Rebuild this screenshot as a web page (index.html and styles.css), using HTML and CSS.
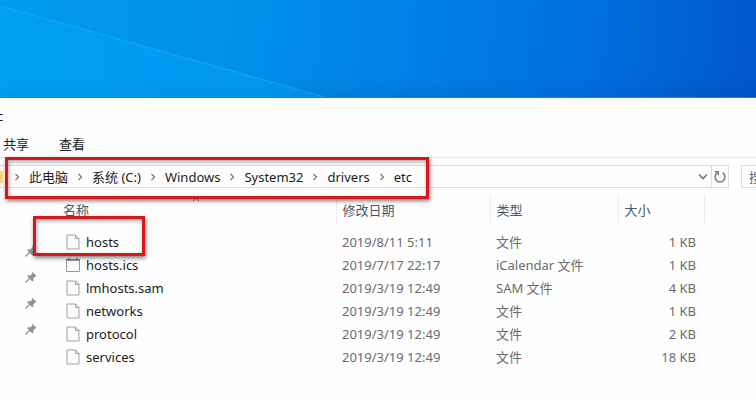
FILE: index.html
```
<!DOCTYPE html>
<html lang="zh-CN">
<head>
  <meta charset="UTF-8" />
  <title>etc</title>
  <link rel="stylesheet" href="styles.css">
</head>
<body>

  <svg class="symbols" aria-hidden="true">
    <symbol id="chevron" viewBox="0 0 6 8">
      <path d="M1.5 1l3 3-3 3" fill="none" stroke="#777" stroke-width="1.2" />
    </symbol>
    <symbol id="file" viewBox="0 0 14 16">
      <path d="M1 1h8.5l3.5 3.500v10.500h-12z" fill="#fbfbfb" stroke="#a0a0a0" />
      <path d="M9.500 1v3.500h3.500" fill="none" stroke="#a0a0a0" />
    </symbol>
    <symbol id="calendar" viewBox="0 0 16 16">
      <path d="M1.500 2.500h13v12h-13z" fill="#fbfbfb" stroke="#999" />
      <path d="M1 3h14M4 1v2M12 1v2" fill="none" stroke="#777" stroke-width="1.400" />
    </symbol>
    <symbol id="pin" viewBox="0 0 12 12">
      <path d="M7 0.500l4.500 4.500-1.300.4-2 2 .1 2.300-1 .7-5.100-5.100.8-1 2.300.1 2-2z" fill="#8c9298" />
      <path d="M4.500 7.500l-4 4" stroke="#8c9298" stroke-width="1.200" />
    </symbol>
  </svg>

  <div class="wallpaper">
    <svg viewBox="0 0 756 98" preserveAspectRatio="none" aria-hidden="true">
      <path d="M0 6L325 98H0z" fill="#00a8ff" fill-opacity="0.350" />
      <path d="M0 6L325 98" stroke="#38b4fc" stroke-opacity="0.500" />
    </svg>
  </div>

  <main class="window">
    <header class="title-bar"><span class="title">etc</span></header>

    <div class="tabs">
      <button type="button">共享</button>
      <button type="button">查看</button>
    </div>

    <div class="toolbar">
      <div class="address">
        <span class="folder"></span>
        <nav class="crumbs">
          <svg class="chevron"><use href="#chevron" /></svg>
          <a href="#">此电脑</a>
          <svg class="chevron"><use href="#chevron" /></svg>
          <a href="#">系统 (C:)</a>
          <svg class="chevron"><use href="#chevron" /></svg>
          <a href="#">Windows</a>
          <svg class="chevron"><use href="#chevron" /></svg>
          <a href="#">System32</a>
          <svg class="chevron"><use href="#chevron" /></svg>
          <a href="#">drivers</a>
          <svg class="chevron"><use href="#chevron" /></svg>
          <a href="#">etc</a>
        </nav>
        <button type="button" class="history" aria-label="历史记录">
          <svg width="12" height="8" viewBox="0 0 12 8"><path d="M2 1.500l4 4 4-4" fill="none" stroke="#777" stroke-width="1.700" /></svg>
        </button>
        <button type="button" class="refresh" aria-label="刷新">
          <svg width="14" height="14" viewBox="0 0 14 14">
            <path d="M9.500 2.600a5 5 0 1 1-5 0" fill="none" stroke="#777" stroke-width="1.500" />
            <path d="M1.800 1.800h3.400v3.400" fill="none" stroke="#777" stroke-width="1.400" />
          </svg>
        </button>
      </div>
      <input type="search" class="search" placeholder="搜索" aria-label="搜索">
      <div class="mark mark-path"></div>
    </div>

    <div class="content">
      <aside class="pins">
        <svg><use href="#pin" /></svg>
        <svg><use href="#pin" /></svg>
        <svg><use href="#pin" /></svg>
        <svg><use href="#pin" /></svg>
      </aside>

      <div class="files">
        <div class="mark mark-file"></div>
        <table>
          <colgroup>
            <col class="col-name">
            <col class="col-date">
            <col class="col-type">
            <col class="col-size">
            <col>
          </colgroup>
          <thead>
            <tr>
              <th class="name">名称<svg class="sort" width="8" height="5" viewBox="0 0 8 5"><path d="M1 4l3-3 3 3" fill="none" stroke="#888" /></svg></th>
              <th>修改日期</th>
              <th>类型</th>
              <th>大小</th>
              <th></th>
            </tr>
          </thead>
          <tbody>
            <tr>
              <td class="name"><svg><use href="#file" /></svg>hosts</td>
              <td>2019/8/11 5:11</td>
              <td>文件</td>
              <td class="size">1 KB</td>
              <td></td>
            </tr>
            <tr>
              <td class="name"><svg><use href="#calendar" /></svg>hosts.ics</td>
              <td>2019/7/17 22:17</td>
              <td>iCalendar 文件</td>
              <td class="size">1 KB</td>
              <td></td>
            </tr>
            <tr>
              <td class="name"><svg><use href="#file" /></svg>lmhosts.sam</td>
              <td>2019/3/19 12:49</td>
              <td>SAM 文件</td>
              <td class="size">4 KB</td>
              <td></td>
            </tr>
            <tr>
              <td class="name"><svg><use href="#file" /></svg>networks</td>
              <td>2019/3/19 12:49</td>
              <td>文件</td>
              <td class="size">1 KB</td>
              <td></td>
            </tr>
            <tr>
              <td class="name"><svg><use href="#file" /></svg>protocol</td>
              <td>2019/3/19 12:49</td>
              <td>文件</td>
              <td class="size">2 KB</td>
              <td></td>
            </tr>
            <tr>
              <td class="name"><svg><use href="#file" /></svg>services</td>
              <td>2019/3/19 12:49</td>
              <td>文件</td>
              <td class="size">18 KB</td>
              <td></td>
            </tr>
          </tbody>
        </table>
      </div>
    </div>
  </main>

</body>
</html>
```
FILE: styles.css
```
* {
  box-sizing: border-box;
}

body {
  margin: 0;
  min-height: 100vh;
  display: flex;
  flex-direction: column;
  background: #fefefe;
  color: #1c1c1c;
  font-family: "Noto Sans", "Noto Sans CJK SC", sans-serif;
  font-size: 13px;
  line-height: 20px;
}

button,
input {
  font: inherit;
  color: inherit;
  background: none;
  border: none;
  padding: 0;
}

.symbols {
  position: absolute;
  width: 0;
  height: 0;
}

.wallpaper {
  height: 98px;
  background:
    linear-gradient(to bottom, transparent 80%, rgba(0, 50, 120, 0.12)),
    linear-gradient(96deg, #009bee 0%, #0091ea 30%, #0080e6 55%, #006fe0 78%, #0057cb 100%);
  border-bottom: 1px solid #3583b8;
}

.wallpaper svg {
  display: block;
  width: 100%;
  height: 100%;
}

.window {
  flex: 1;
  display: flex;
  flex-direction: column;
  overflow: hidden;
}

.title-bar {
  height: 36px;
  padding-top: 8px;
}

.title {
  margin-left: -15px;
}

.tabs {
  display: flex;
  gap: 30px;
  height: 24px;
  padding-left: 3px;
  border-bottom: 1px solid #e8e8e8;
}

.tabs button {
  height: 20px;
}

.toolbar {
  position: relative;
  display: flex;
  gap: 12px;
  padding: 7px 0 8px;
}

.address {
  flex: 1;
  display: flex;
  align-items: center;
  height: 23px;
  border: 1px solid #dcdcdc;
  border-left: none;
}

.folder {
  width: 3px;
  height: 12px;
  background: #f8d775;
}

.crumbs {
  flex: 1;
  display: flex;
  align-items: center;
  gap: 9px;
  padding-left: 11px;
  white-space: nowrap;
}

.crumbs a {
  color: inherit;
  text-decoration: none;
}

.chevron {
  flex: none;
  width: 6px;
  height: 8px;
}

.history,
.refresh {
  display: flex;
  align-items: center;
  justify-content: center;
  width: 17px;
  height: 21px;
}

.refresh {
  border-left: 1px solid #dcdcdc;
}

.search {
  width: 150px;
  height: 23px;
  margin-right: -135px;
  padding-left: 7px;
  border: 1px solid #dcdcdc;
}

.search::placeholder {
  color: #666;
  opacity: 1;
}

.content {
  flex: 1;
  display: flex;
}

.pins {
  display: flex;
  flex-direction: column;
  gap: 14px;
  width: 43px;
  padding: 49px 0 0 25px;
  border-right: 1px solid #f8f8f8;
}

.pins svg {
  width: 12px;
  height: 12px;
}

.files {
  position: relative;
  flex: 1;
}

table {
  width: 100%;
  table-layout: fixed;
  border-collapse: collapse;
}

.col-name {
  width: 293px;
}

.col-date {
  width: 154px;
}

.col-type {
  width: 128px;
}

.col-size {
  width: 86px;
}

th {
  position: relative;
  height: 27px;
  padding: 0 0 0 6px;
  border-right: 1px solid #ebebeb;
  color: #47586c;
  font-weight: normal;
  text-align: left;
}

th:last-child {
  border-right: none;
}

tbody::before {
  content: "";
  display: block;
  height: 7px;
}

td {
  height: 23px;
  padding: 0 0 0 6px;
  color: #6b6b6b;
  white-space: nowrap;
}

th.name {
  padding-left: 20px;
}

td.name {
  padding-left: 22px;
  color: #1c1c1c;
}

td.name svg {
  width: 16px;
  height: 16px;
  margin-right: 5px;
  vertical-align: -3px;
}

td.size {
  padding-right: 8px;
  text-align: right;
}

.sort {
  position: absolute;
  top: 1px;
  left: 149px;
}

/* red highlight frames */
.mark {
  position: absolute;
  z-index: 1;
  border: 3px solid #d3191d;
  box-shadow: 1px 2px 4px rgba(0, 0, 0, 0.5), inset 1px 2px 4px rgba(0, 0, 0, 0.35);
  pointer-events: none;
}

.mark-path {
  top: -1px;
  left: 5px;
  width: 424px;
  height: 42px;
}

.mark-file {
  top: 20px;
  left: -10px;
  width: 112px;
  height: 40px;
}
```
